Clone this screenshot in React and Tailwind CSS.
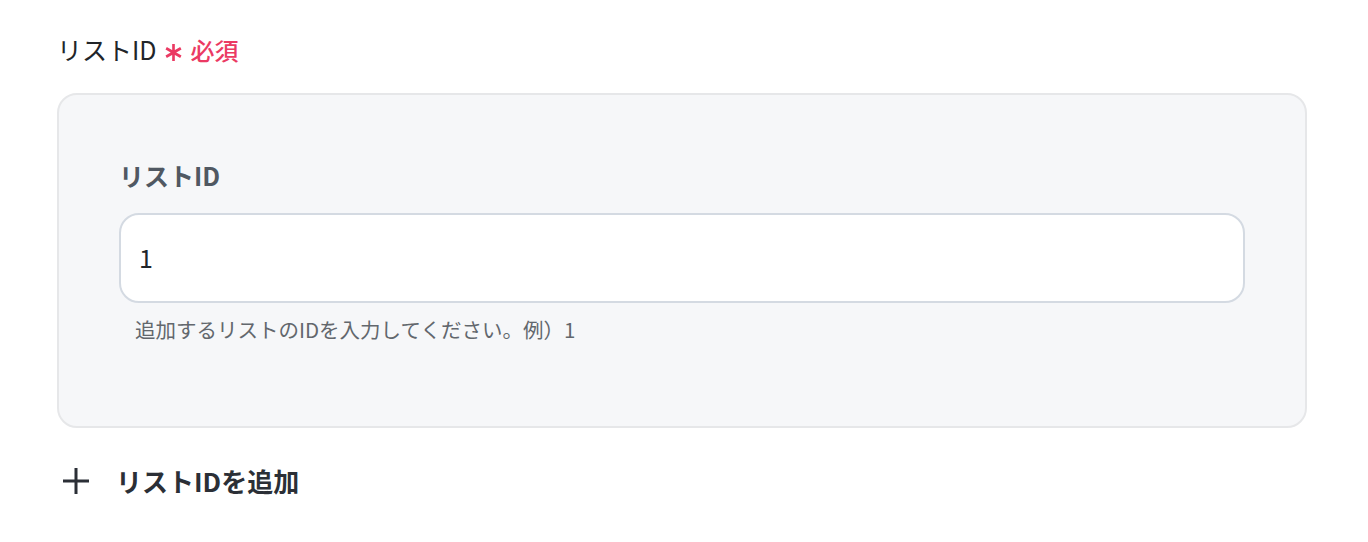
export default function App() {
  return (
    <div className="min-h-[542px] w-[1368px] bg-white pl-[57px] pr-[61px] pt-[32px] text-[#212529] [font-family:'Noto_Sans_CJK_JP','Noto_Sans',sans-serif]">
      {/* Field label */}
      <div className="flex items-center h-[36px]">
        <span className="text-[25px] font-normal">リストID</span>
        <svg className="ml-[8px] mt-[4px]" width="17" height="17" viewBox="0 0 16 16" stroke="#eb3a63" strokeWidth="2.5" strokeLinecap="butt">
          <path d="M8 0v16M1.1 4l13.8 8M1.1 12l13.8-8" />
        </svg>
        <span className="ml-[9px] text-[24px] font-medium text-[#eb3a63]">必須</span>
      </div>

      {/* Card */}
      <div className="mt-[25px] h-[335px] rounded-[20px] border-2 border-[#e6e7e9] bg-[#f6f7f9] pl-[60px] pr-[60px] pt-[62px]">
        <div className="text-[25px] font-bold text-[#505862] leading-[36px]">リストID</div>
        <div className="mt-[20px] flex h-[90px] items-center rounded-[20px] border-2 border-[#d4dae2] bg-white px-[18px]">
          <span className="text-[25px] text-[#212529]">1</span>
        </div>
        <div className="mt-[11px] pl-[16px] text-[20.5px] text-[#62676d] leading-[30px]">
          追加するリストのIDを入力してください。例）1
        </div>
      </div>

      {/* Add button */}
      <button className="mt-[33px] flex items-center gap-[27px] pl-[6px] text-[#2b2f36]">
        <svg width="26" height="26" viewBox="0 0 26 26" fill="none" stroke="currentColor" strokeWidth="3">
          <path d="M13 0v26M0 13h26" />
        </svg>
        <span className="text-[26px] font-bold">リストIDを追加</span>
      </button>
    </div>
  )
}
